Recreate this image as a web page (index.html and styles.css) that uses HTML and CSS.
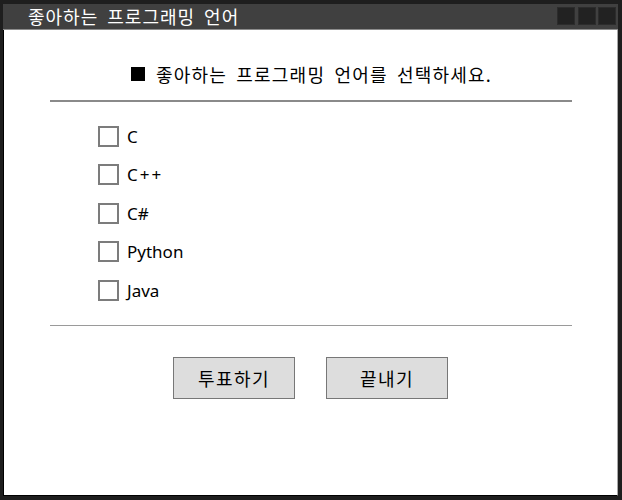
FILE: index.html
```html
<!DOCTYPE html>
<html lang="ko">
<head>
<meta charset="utf-8">
<title>좋아하는 프로그래밍 언어</title>
<link rel="stylesheet" href="styles.css">
</head>
<body>
<div class="frame">
  <div class="titlebar">
    <span class="title">좋아하는 프로그래밍 언어</span>
    <div class="controls">
      <span class="ctl"></span>
      <span class="ctl"></span>
      <span class="ctl"></span>
    </div>
  </div>
  <div class="content">
    <div class="heading"><span class="bullet"></span><span>좋아하는 프로그래밍 언어를 선택하세요.</span></div>
    <div class="rule thick"></div>
    <ul class="options">
      <li class="option"><span class="box"></span><span class="label">C</span></li>
      <li class="option"><span class="box"></span><span class="label wide">C++</span></li>
      <li class="option"><span class="box"></span><span class="label">C#</span></li>
      <li class="option"><span class="box"></span><span class="label">Python</span></li>
      <li class="option"><span class="box"></span><span class="label">Java</span></li>
    </ul>
    <div class="rule thin"></div>
    <div class="buttons">
      <button class="btn">투표하기</button>
      <button class="btn">끝내기</button>
    </div>
  </div>
</div>
</body>
</html>
```
FILE: styles.css
```css
html, body {
  margin: 0;
  padding: 0;
  background: #1e1e1e;
}
body {
  width: 622px;
  height: 500px;
  overflow: hidden;
  font-family: "Noto Sans CJK KR", "Noto Sans", sans-serif;
}
.frame {
  box-sizing: border-box;
  width: 622px;
  height: 500px;
  padding: 4px 4px 4px 3px;
  display: flex;
  flex-direction: column;
}
.titlebar {
  height: 25px;
  background: #404040;
  border-bottom: 1px solid #8c8c8c;
  display: flex;
  align-items: center;
  justify-content: space-between;
  padding-left: 25px;
  padding-right: 0;
}
.title {
  color: #ffffff;
  font-size: 18px;
  line-height: 25px;
  letter-spacing: 1px;
  word-spacing: 3px;
}
.controls {
  display: flex;
  gap: 4px;
  align-self: flex-start;
  margin-top: 4px;
  margin-right: 3px;
}
.ctl {
  width: 16px;
  height: 16px;
  background: #222222;
  box-shadow: 0 0 0 1px #2c2c2c;
}
.controls .ctl:first-child {
  margin-right: 1px;
}
.content {
  flex: 1;
  background: #ffffff;
  border-left: 1px solid #000;
  border-right: 1px solid #a8a8a8;
  border-bottom: 1px solid #000;
  display: flex;
  flex-direction: column;
  padding-top: 32px;
}
.heading {
  display: flex;
  align-items: center;
  justify-content: center;
  gap: 11px;
  height: 24px;
  font-size: 18px;
  letter-spacing: 1.2px;
  word-spacing: 3px;
  color: #000;
  padding-left: 2px;
}
.bullet {
  width: 14px;
  height: 14px;
  background: #000;
}
.rule {
  margin-left: 46px;
  width: 522px;
  background: #8a8a8a;
}
.rule.thick {
  height: 2px;
  margin-top: 14px;
}
.rule.thin {
  height: 1px;
  background: #9a9a9a;
  margin-top: 15.75px;
}
.options {
  list-style: none;
  margin: 14.75px 0 0 0;
  padding: 0 0 0 94px;
}
.option {
  height: 38.5px;
  display: flex;
  align-items: center;
  gap: 8px;
}
.box {
  box-sizing: border-box;
  width: 21px;
  height: 21px;
  border: 2px solid #7c7c7c;
  background: #fff;
}
.label {
  font-family: "Noto Sans", sans-serif;
  font-size: 17px;
  color: #000;
}
.label.wide {
  letter-spacing: 2px;
}
.buttons {
  display: flex;
  justify-content: center;
  gap: 31px;
  margin-top: 31px;
}
.btn {
  box-sizing: border-box;
  width: 122px;
  height: 42px;
  background: #dddddd;
  border: 1px solid #777777;
  font-family: "Noto Sans CJK KR", sans-serif;
  font-size: 18px;
  letter-spacing: 1.5px;
  color: #000;
  padding: 0;
}
```
